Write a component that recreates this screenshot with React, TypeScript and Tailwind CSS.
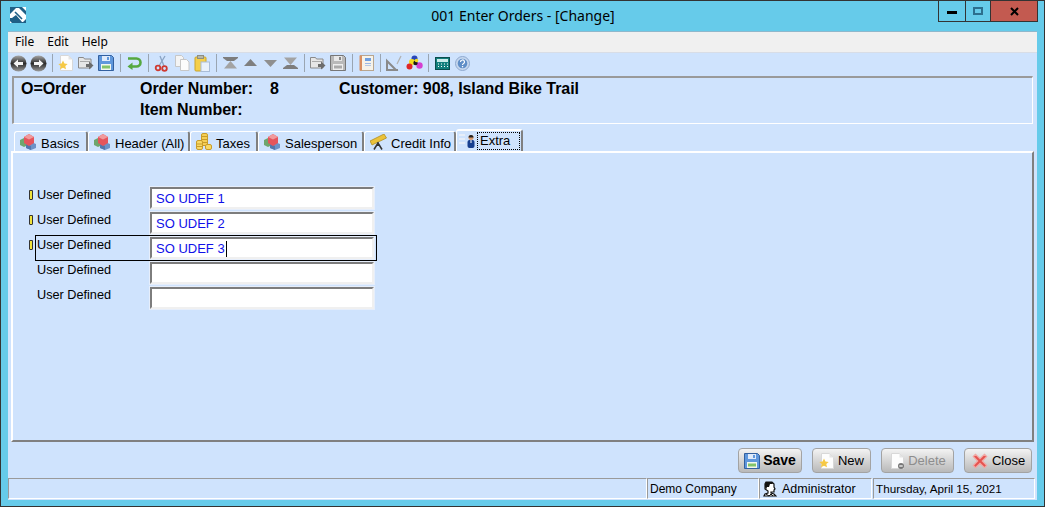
import React from "react";

const Floppy = ({ gray = false, size = 16 }: { gray?: boolean; size?: number }) => (
  <svg width={size} height={size} viewBox="0 0 16 16" className="shrink-0">
    <path d="M.5.5h13l2 2v13H.5z" fill={gray ? "#b9b9b9" : "#5f97dc"} stroke={gray ? "#777" : "#33609f"} />
    <rect x="4" y="1" width="8" height="5" fill={gray ? "#e8e8e8" : "#dfeafa"} />
    <rect x="9" y="2" width="2" height="3" fill={gray ? "#888" : "#5f97dc"} />
    <rect x="3" y="9" width="10" height="6" fill={gray ? "#eee" : "#f2f7ee"} />
    <rect x="4" y="10.5" width="8" height="3" fill={gray ? "#aaa" : "#83c46a"} />
  </svg>
);

const Page = ({ badge }: { badge?: "star" | "minus" }) => (
  <svg width="16" height="16" viewBox="0 0 16 16" className="shrink-0">
    <path d="M2.500.5h8l4 4v11h-12z" fill="#fdfdfd" stroke="#d8d8d8" />
    <path d="M10.500.5v4h4z" fill="#e4e4e4" />
    {badge === "star" && <path d="M5 5.500l1.400 3 3.300.4-2.400 2.200.7 3.200L5 12.700l-3 1.600.7-3.200L.3 8.900l3.300-.4z" fill="#f6c945" />}
    {badge === "minus" && (
      <g>
        <circle cx="12" cy="13" r="3" fill="#777" />
        <rect x="10.300" y="12.400" width="3.400" height="1.200" fill="#fff" />
      </g>
    )}
  </svg>
);

const NavCircle = ({ dir }: { dir: "l" | "r" }) => (
  <svg width="17" height="17" viewBox="0 0 17 17" className="shrink-0">
    <defs>
      <linearGradient id={"nav" + dir} x1="0" y1="0" x2="0" y2="1">
        <stop offset="0" stopColor="#a8a8a8" />
        <stop offset="0.5" stopColor="#2c2c2c" />
        <stop offset="1" stopColor="#9c9c9c" />
      </linearGradient>
    </defs>
    <circle cx="8.500" cy="8.500" r="8" fill={"url(#nav" + dir + ")"} />
    <path
      d={dir === "l" ? "M3.500 8.500L8 4.500v2.500h5v3H8v2.500z" : "M13.500 8.500L9 4.500v2.500H4v3h5v2.500z"}
      fill="#f4f4f4"
    />
  </svg>
);

const Folder = () => (
  <svg width="16" height="16" viewBox="0 0 16 16" className="shrink-0">
    <path d="M.5 2.500h5l1 1.500h6.500v9H.5z" fill="#e6e6e6" stroke="#8a8a8a" />
    <rect x="2" y="6" width="10" height="1" fill="#aaa" />
    <path d="M8 9h3V6.500l4.500 4-4.500 4V12H8z" fill="#6c6c6c" />
  </svg>
);

const Undo = () => (
  <svg width="16" height="16" viewBox="0 0 16 16" className="shrink-0">
    <path d="M2 3.500h8.500a3.500 3.500 0 0 1 0 8H5" fill="none" stroke="#55a83f" strokeWidth="2.600" />
    <path d="M6.500 7.500L1.500 11.500l5 3.500z" fill="#55a83f" />
  </svg>
);

const Scissors = () => (
  <svg width="16" height="17" viewBox="0 0 16 17" className="shrink-0">
    <path d="M5 11L11 1M10 11L6 1" stroke="#8aa4c4" strokeWidth="1.300" fill="none" />
    <circle cx="4" cy="13" r="2.300" fill="none" stroke="#cf3a32" strokeWidth="1.800" />
    <circle cx="10.500" cy="13.500" r="2.300" fill="none" stroke="#cf3a32" strokeWidth="1.800" />
  </svg>
);

const CopyIcon = () => (
  <svg width="16" height="16" viewBox="0 0 16 16" className="shrink-0">
    <path d="M1.500.5h6l2 2v9h-8z" fill="#f4f4f4" stroke="#c7c7c7" />
    <path d="M6.500 4.500h6l2.500 2.500v8.500H6.500z" fill="#fcfcfc" stroke="#c7c7c7" />
  </svg>
);

const Paste = () => (
  <svg width="16" height="17" viewBox="0 0 16 17" className="shrink-0">
    <rect x="1" y="2" width="11" height="14" rx="1" fill="#f4cf4a" stroke="#c9a42c" />
    <rect x="3.500" y="0.500" width="6" height="3" fill="#b8b8a8" stroke="#8f8f80" />
    <rect x="7" y="7" width="8.500" height="9.500" fill="#e9f1fb" stroke="#a9bdd8" />
  </svg>
);

const Arrow = ({ kind }: { kind: "first" | "up" | "down" | "last" }) => (
  <svg width="17" height="12" viewBox="0 0 17 12" className="shrink-0">
    {kind === "first" && (
      <g>
        <path d="M1 0h15v1l-4 3H5L1 1z" fill="#7d7d7d" />
        <path d="M8.500 4l6.500 7.500H2z" fill="#a3a3a3" />
      </g>
    )}
    {kind === "up" && <path d="M8.500 2l6.500 7H2z" fill="#7f7f7f" />}
    {kind === "down" && <path d="M8.500 10L15 3H2z" fill="#8f8f8f" />}
    {kind === "last" && (
      <g>
        <path d="M2 .5h13L8.500 8z" fill="#a3a3a3" />
        <path d="M5 8h7l4 3v1H1v-1z" fill="#7d7d7d" />
      </g>
    )}
  </svg>
);

const Notebook = () => (
  <svg width="15" height="16" viewBox="0 0 15 16" className="shrink-0">
    <rect x="1.500" y="0.500" width="13" height="15" fill="#f6f3ea" stroke="#b8a690" />
    <rect x="0.500" y="0.500" width="2.500" height="15" fill="#d88f62" />
    <rect x="6" y="3" width="6" height="3" fill="#6f9fe0" />
    <rect x="6" y="8" width="6" height="1" fill="#9ab8e6" />
    <rect x="6" y="10" width="6" height="1" fill="#b5c8e6" />
  </svg>
);

const Triangle = () => (
  <svg width="17" height="16" viewBox="0 0 17 16" className="shrink-0">
    <path d="M1 15V6l9 9z" fill="none" stroke="#8a8a8a" strokeWidth="2" />
    <path d="M1 15h11" stroke="#8a8a8a" strokeWidth="2" />
    <path d="M11 9l4-8" stroke="#b0b0b0" strokeWidth="1.300" />
  </svg>
);

const Palette = () => (
  <svg width="17" height="16" viewBox="0 0 17 16" className="shrink-0">
    <circle cx="8.500" cy="3.500" r="3" fill="#2746b8" />
    <circle cx="6" cy="7" r="3" fill="#f2dc1d" />
    <circle cx="3.500" cy="11.500" r="3" fill="#df2727" />
    <circle cx="13.500" cy="10.500" r="3.200" fill="#d53fd0" />
    <circle cx="9.500" cy="8" r="2.200" fill="#1b1b1b" />
    <circle cx="10.500" cy="5.500" r="1.800" fill="#f2dc1d" />
  </svg>
);

const Calc = () => (
  <svg width="15" height="13" viewBox="0 0 15 13" className="shrink-0">
    <rect x="0.500" y="0.500" width="14" height="12" fill="#127f7c" stroke="#0b4e4e" />
    <rect x="2" y="2" width="11" height="3" fill="#cbecea" />
    <path d="M3 7h1M6 7h1M9 7h1M12 7h1M3 9.500h1M6 9.500h1M9 9.500h1M12 9.500h1" stroke="#fff" />
  </svg>
);

const Help = () => (
  <svg width="15" height="15" viewBox="0 0 15 15" className="shrink-0">
    <circle cx="7.500" cy="7.500" r="7" fill="#c5d7ee" stroke="#8fa9cf" />
    <circle cx="7.500" cy="7.500" r="4.800" fill="#5f8ec7" />
    <path d="M5.500 6a2 2 0 1 1 2.800 1.800c-.6.300-.8.600-.8 1.200" fill="none" stroke="#fff" strokeWidth="1.200" />
    <rect x="6.900" y="10" width="1.300" height="1.300" fill="#fff" />
  </svg>
);

const Cubes = () => (
  <svg width="17" height="16" viewBox="0 0 17 16" className="shrink-0">
    <path d="M0 6l4-2 4 2v5l-4 2-4-2z" fill="#6fa66f" />
    <path d="M6 10l5-2 5 2v4l-5 2-5-2z" fill="#6c92c8" />
    <path d="M6 10l5 2v4l-5-2z" fill="#5377ac" />
    <path d="M4 3l5-3 5 3v6l-5 3-5-3z" fill="#e5555c" />
    <path d="M4 3l5 2.500L14 3 9 0z" fill="#f09a9c" />
  </svg>
);

const Coins = () => (
  <svg width="16" height="17" viewBox="0 0 16 17" className="shrink-0">
    <rect x="5.500" y="0.500" width="6" height="12" rx="1.500" fill="#f6cf55" stroke="#c89c2a" />
    <path d="M5.500 3.500h6M5.500 6.500h6M5.500 9.500h6" stroke="#c89c2a" />
    <rect x="0.500" y="7.500" width="6" height="9" rx="1.500" fill="#f8d966" stroke="#c89c2a" />
    <path d="M.5 11h6M.5 13.500h6" stroke="#c89c2a" />
    <rect x="9.500" y="11.500" width="6" height="5" rx="1.500" fill="#f8d966" stroke="#c89c2a" />
  </svg>
);

const Telescope = () => (
  <svg width="17" height="16" viewBox="0 0 17 16" className="shrink-0">
    <path d="M0 7L14 0l2.500 4L2 11z" fill="#ebc23a" stroke="#a98516" strokeWidth="0.700" />
    <path d="M8 8v4M8 9l-4 6.500M8 9l4 6.500" stroke="#333" strokeWidth="1.500" fill="none" />
  </svg>
);

const PersonTab = () => (
  <svg width="17" height="16" viewBox="0 0 17 16" className="shrink-0">
    <path d="M0 2h6M0 6h6M0 10h6" stroke="#e6eef9" strokeWidth="2" />
    <circle cx="12" cy="4.500" r="2.500" fill="#d99a6c" />
    <path d="M12 2a2.500 2.500 0 0 0-2.500 2.500h5A2.500 2.500 0 0 0 12 2z" fill="#222" />
    <rect x="8.500" y="7" width="7" height="8" rx="2" fill="#173f8f" />
    <rect x="11.500" y="7" width="1" height="3" fill="#fff" />
  </svg>
);

const CloseX = () => (
  <svg width="18" height="18" viewBox="0 0 16 16" className="shrink-0">
    <path d="M2 4l2-2 4 4 4-4 2 2-4 4 4 4-2 2-4-4-4 4-2-2 4-4z" fill="#e5534f" stroke="#f2a6a2" strokeWidth="1" />
  </svg>
);

const AdminHead = () => (
  <svg width="14" height="16" viewBox="0 0 14 16" className="shrink-0">
    <path d="M3 1h6l2 2v3l1 2-1 1v2H8v1l3 1 2 2H1l1-2 3-1v-2L2 8V3z" fill="#fff" stroke="#111" strokeWidth="1.200" />
    <path d="M3 1h6l1 2H7L6 6H4L3 9 2 6V3z" fill="#111" />
    <path d="M3 13l3 2 2-2 2 2" stroke="#111" fill="none" />
  </svg>
);

const Logo = () => (
  <svg width="16" height="16" viewBox="0 0 16 16" className="shrink-0">
    <rect width="16" height="16" fill="#1f5f86" />
    <path d="M0 7l6-6 3 0 7 7v4l-3 3h-1L6 8 2 11H0z" fill="#fff" />
    <path d="M5 5l7 7" stroke="#1f5f86" strokeWidth="1.600" />
    <path d="M12 0h4v4zM0 14l2 2H0z" fill="#fff" />
  </svg>
);

const Sep = () => <div className="w-px h-[18px] bg-[#9aa5b1] ml-[4px] mr-[3px] shrink-0" />;

const Tool = ({ children }: { children: React.ReactNode }) => (
  <div className="flex items-center justify-center shrink-0 w-[20px]">{children}</div>
);

const Tab = ({ icon, label, w }: { icon: React.ReactNode; label: string; w: number }) => (
  <div
    className="h-[20px] flex items-center gap-[4px] pl-[5px] border-t border-l border-white border-r-2 border-r-[#808080] rounded-t-[3px] text-[13px] text-black shrink-0 box-border"
    style={{ width: w }}
  >
    {icon}
    <span className="whitespace-nowrap pt-[5px]">{label}</span>
  </div>
);

const Pencil = () => (
  <div className="w-[4px] h-[10px] bg-[#f0e23a] border border-[#333] rounded-b-[1px] shrink-0" />
);

const Row = ({ value, mark, focus }: { value: string; mark?: boolean; focus?: boolean }) => (
  <div className="relative flex h-[25px] items-start">
    <div className="w-[8px] pt-[3px] shrink-0">{mark && <Pencil />}</div>
    <div className="w-[113px] text-[12.7px] leading-[14px] text-black shrink-0 pt-[1px]">User Defined</div>
    <div className="w-[224px] h-[22px] bg-white border-2 border-t-[#7d7d7d] border-l-[#7d7d7d] border-r-[#f0f0f0] border-b-[#f0f0f0] outline outline-1 outline-[#e6eefb] pl-[4px] pt-[1px] text-[13px] leading-[18px] text-[#1010e8] flex items-center box-border">
      {value}
      {focus && <span className="inline-block w-px h-[16px] bg-black ml-px" />}
    </div>
    {focus && (
      <div className="absolute left-[6px] top-[-2px] w-[342px] h-[26px] border border-black pointer-events-none" />
    )}
  </div>
);

const ActionButton = ({ icon, label, w, bold, disabled }: { icon: React.ReactNode; label: string; w: number; bold?: boolean; disabled?: boolean }) => (
  <div
    className={
      "h-[25px] flex items-center justify-center gap-[3px] rounded-[4px] border border-[#a3a3a3] bg-gradient-to-b from-[#f3f3f3] to-[#b9b9b9] shrink-0 box-border " +
      (bold ? "font-bold text-[14px] " : "text-[13px] ") +
      (disabled ? "text-[#8d8d8d]" : "text-black")
    }
    style={{ width: w }}
  >
    {icon}
    <span>{label}</span>
  </div>
);

const cell = "border-t border-l border-t-[#9a9a9a] border-l-[#9a9a9a] border-b border-r border-b-white border-r-white flex items-center";

export default function App() {
  return (
    <div className="w-[1045px] h-[507px] box-border border border-[#333] bg-[#66cbea] flex flex-col overflow-hidden font-['Liberation_Sans',sans-serif]">
      {/* title bar */}
      <div className="h-[30px] flex items-start shrink-0">
        <div className="pl-[9px] pt-[6px]">
          <Logo />
        </div>
        <div className="flex-1 text-center text-[14px] leading-[29px] text-black font-['Noto_Sans',sans-serif] pl-[82px]">
          001 Enter Orders - [Change]
        </div>
        <div className="flex h-[21px] mr-[6px] border border-t-0 border-[#333]">
          <div className="w-[27px] border-r border-[#333] flex items-center justify-center">
            <div className="w-[10px] h-[3px] bg-black mt-[2px]" />
          </div>
          <div className="w-[25px] border-r border-[#333] flex items-center justify-center">
            <div className="w-[10px] h-[8px] border-2 border-[#2c6f8e]" />
          </div>
          <div className="w-[46px] bg-[#c35a50] flex items-center justify-center">
            <svg width="9" height="9" viewBox="0 0 9 9"><path d="M1 1l7 7M8 1L1 8" stroke="#000" strokeWidth="2" /></svg>
          </div>
        </div>
      </div>

      <div className="mx-[7px] w-[1029px] flex-1 flex flex-col border-t border-[#8fb8cc] bg-[#cfe3fd] min-h-0">
        {/* menu */}
        <div className="h-[20px] bg-[#f0f0f0] flex items-center gap-[13px] pl-[7px] text-[12px] text-black font-['Noto_Sans',sans-serif] shrink-0">
          <span>File</span>
          <span>Edit</span>
          <span>Help</span>
        </div>
        {/* toolbar */}
        <div className="h-[24px] flex items-center pb-[3px] shrink-0 border-t border-[#d8dde6] box-border">
          <Tool><NavCircle dir="l" /></Tool>
          <Tool><NavCircle dir="r" /></Tool>
          <Sep />
          <Tool><Page badge="star" /></Tool>
          <Tool><Folder /></Tool>
          <Tool><Floppy /></Tool>
          <Sep />
          <Tool><Undo /></Tool>
          <Sep />
          <Tool><Scissors /></Tool>
          <Tool><CopyIcon /></Tool>
          <Tool><Paste /></Tool>
          <Sep />
          <Tool><Arrow kind="first" /></Tool>
          <Tool><Arrow kind="up" /></Tool>
          <Tool><Arrow kind="down" /></Tool>
          <Tool><Arrow kind="last" /></Tool>
          <Sep />
          <Tool><Folder /></Tool>
          <Tool><Floppy gray /></Tool>
          <Sep />
          <Tool><Notebook /></Tool>
          <Sep />
          <Tool><Triangle /></Tool>
          <Tool><Palette /></Tool>
          <Sep />
          <Tool><Calc /></Tool>
          <Tool><Help /></Tool>
        </div>

        {/* header */}
        <div className="mx-[4px] h-[48px] border-t-2 border-l-2 border-t-[#9a9a9a] border-l-[#9a9a9a] border-b border-r border-b-white border-r-white shrink-0 box-border text-[16px] font-bold tracking-[-0.06px] text-black leading-[20px] pl-[7px] pt-[1px] grid grid-cols-[119px_199px_1fr] grid-rows-[21px_20px]">
          <div>O=Order</div>
          <div className="flex"><span className="w-[130px]">Order Number:</span><span>8</span></div>
          <div>Customer: 908, Island Bike Trail</div>
          <div />
          <div>Item Number:</div>
        </div>

        {/* tabs */}
        <div className="h-[27px] shrink-0 flex items-end pl-[6px]">
          <Tab icon={<Cubes />} label="Basics" w={74} />
          <Tab icon={<Cubes />} label="Header (All)" w={102} />
          <Tab icon={<Coins />} label="Taxes" w={68} />
          <Tab icon={<Cubes />} label="Salesperson" w={106} />
          <Tab icon={<Telescope />} label="Credit Info" w={92} />
          <div className="h-[22px] w-[67px] flex items-center pl-[2px] gap-[1px] border-t-2 border-l border-white border-r-2 border-r-[#808080] rounded-t-[3px] text-[13px] text-black shrink-0 box-border">
            <PersonTab />
            <span className="border border-dotted border-black pl-[2px] w-[43px] h-[18px] leading-[16px]">Extra</span>
          </div>
        </div>

        {/* tab panel */}
        <div className="mx-[3px] h-[291px] shrink-0 box-border border-t-2 border-l-2 border-white border-r-2 border-r-[#808080] border-b-2 border-b-[#808080] pt-[34px] pl-[16px]">
          <Row value="SO UDEF 1" mark />
          <Row value="SO UDEF 2" mark />
          <Row value="SO UDEF 3" mark focus />
          <Row value="" />
          <Row value="" />
        </div>

        {/* actions */}
        <div className="flex justify-end items-center gap-[10px] h-[36px] pr-[5px] shrink-0 pt-[1px]">
          <ActionButton icon={<Floppy />} label="Save" w={64} bold />
          <ActionButton icon={<Page badge="star" />} label="New" w={59} />
          <ActionButton icon={<Page badge="minus" />} label="Delete" w={73} disabled />
          <ActionButton icon={<CloseX />} label="Close" w={68} />
        </div>

        {/* status */}
        <div className="flex h-[21px] shrink-0 text-[12px] text-black items-stretch">
          <div className={"w-[639px] " + cell} />
          <div className={"w-[112px] pl-[2px] " + cell}>Demo Company</div>
          <div className={"w-[113px] pl-[3px] gap-[5px] text-[12.5px] " + cell}><AdminHead /><span className="pt-[2px]">Administrator</span></div>
          <div className={"w-[162px] pl-[2px] ml-[1px] text-[11.7px] " + cell}><span className="pt-[1px]">Thursday, April 15, 2021</span></div>
        </div>
      </div>
      <div className="h-[6px] shrink-0" />
    </div>
  );
}
